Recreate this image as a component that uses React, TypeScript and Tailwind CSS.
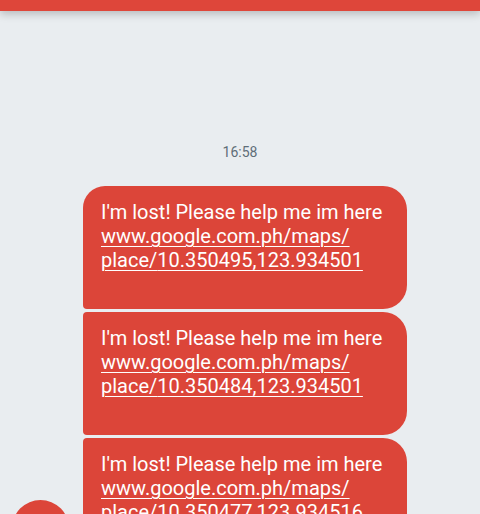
import React from "react";

const msgs = [
  "10.350495,123.934501",
  "10.350484,123.934501",
  "10.350477,123.934516",
];

export default function App() {
  return (
    <div
      className="relative w-[480px] h-[514px] overflow-hidden bg-[#e9edf0]"
      style={{ fontFamily: "Roboto, 'Noto Sans', sans-serif" }}
    >
      <div className="relative z-10 h-[11px] bg-[#de463a] shadow-[0_3px_8px_rgba(0,0,0,0.22)]" />
      <div className="pt-[133px] flex flex-col items-center">
        <div className="text-[14px] leading-[16px] text-[#5f6e78]">16:58</div>
      </div>
      <div className="mt-[26px] ml-[83px] flex flex-col gap-[3px]">
        {msgs.map((m, i) => (
          <div
            key={i}
            className={
              "w-[324px] h-[123px] bg-[#dc4539] text-white pl-[18px] pt-[14px] text-[20px] leading-[24px] rounded-tr-[24px] rounded-br-[24px] rounded-bl-[4px] " +
              (i === 0 ? "rounded-tl-[22px]" : "rounded-tl-[4px]")
            }
          >
            <div>I'm lost! Please help me im here</div>
            <div className="underline underline-offset-[3px] decoration-1">
              www.google.com.ph/maps/
              <br />
              place/{m}
            </div>
          </div>
        ))}
      </div>
      <div className="absolute left-[12px] top-[500px] w-[57px] h-[57px] rounded-full bg-[#dc4539]" />
    </div>
  );
}
